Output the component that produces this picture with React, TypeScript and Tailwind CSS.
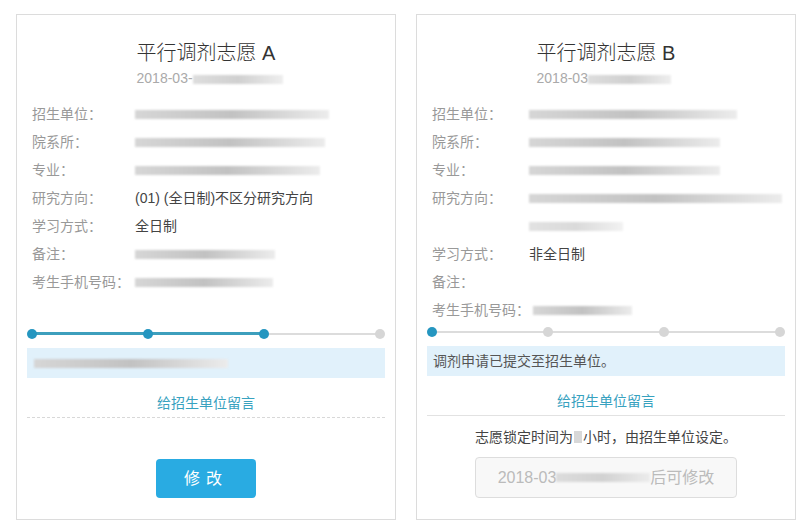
import React from "react";

// 打码区域：模糊的灰条
function Blur({ w, className = "" }: { w: number; className?: string }) {
  return (
    <span
      className={`inline-block h-[9px] align-middle blur-[1px] bg-linear-to-r from-[#d6d6d6] via-[#c2c2c2] to-[#ececec] ${className}`}
      style={{ width: w }}
    />
  );
}

type Row = { label: string; value?: string; blur?: number; blur2?: number };

const ROWS_A: Row[] = [
  { label: "招生单位：", blur: 194 },
  { label: "院系所：", blur: 190 },
  { label: "专业：", blur: 185 },
  { label: "研究方向：", value: "(01) (全日制)不区分研究方向" },
  { label: "学习方式：", value: "全日制" },
  { label: "备注：", blur: 140 },
  { label: "考生手机号码：", blur: 138 },
];

const ROWS_B: Row[] = [
  { label: "招生单位：", blur: 208 },
  { label: "院系所：", blur: 191 },
  { label: "专业：", blur: 191 },
  { label: "研究方向：", blur: 253, blur2: 94 },
  { label: "学习方式：", value: "非全日制" },
  { label: "备注：" },
  { label: "考生手机号码：", blur: 99 },
];

function Progress({ step }: { step: number }) {
  const dots = [0, 1, 2, 3];
  return (
    <div className="relative mx-[5px] h-[10px]">
      <div className="absolute inset-x-0 top-[4px] h-[2px] bg-[#dcdcdc]" />
      {step > 0 && (
        <div
          className="absolute left-0 top-[3px] h-[3px] bg-[#3d9fbd]"
          style={{ width: `${(step / 3) * 100}%` }}
        />
      )}
      {dots.map((d) => (
        <span
          key={d}
          className={`absolute top-0 -ml-[5px] h-[10px] w-[10px] rounded-full ${
            d <= step ? "bg-[#2596c0]" : "bg-[#d6d6d6]"
          }`}
          style={{ left: `${(d / 3) * 100}%` }}
        />
      ))}
    </div>
  );
}

function Card({
  name,
  datePrefix,
  dateBlur,
  rows,
  labelW,
  children,
}: {
  name: string;
  datePrefix: string;
  dateBlur: number;
  rows: Row[];
  labelW: string;
  children: React.ReactNode;
}) {
  return (
    <div className="flex h-[506px] w-[380px] flex-col border border-[#dcdcdc] bg-white">
      <div className="flex flex-col items-center pt-[24px]">
        <div className="w-fit">
          <h2 className="text-[20px] font-light leading-[28px] text-[#333]">{name}</h2>
          <div className="mt-[1px] h-[20px] w-0 whitespace-nowrap text-[14px] leading-[20px] text-[#aaa]">
            {datePrefix}
            <Blur w={dateBlur} className="from-[#dddddd] via-[#d0d0d0] to-[#eeeeee]" />
          </div>
        </div>
      </div>
      <div className="mt-[12px] px-[15px] text-[14px]">
        {rows.map((r) => (
          <div key={r.label} className="flex leading-[28px]">
            <span className={`${labelW} shrink-0 whitespace-nowrap pr-[3px] text-[#999]`}>{r.label}</span>
            <div className="flex flex-col">
              <span className="flex h-[28px] items-center text-[#444]">
                {r.value ?? (r.blur ? <Blur w={r.blur} /> : null)}
              </span>
              {r.blur2 && (
                <span className="flex h-[28px] items-center">
                  <Blur w={r.blur2} className="from-[#e2e2e2] via-[#dadada] to-[#f2f2f2]" />
                </span>
              )}
            </div>
          </div>
        ))}
      </div>
      <div className="mt-auto px-[10px] pb-[21px]">{children}</div>
    </div>
  );
}

export default function App() {
  return (
    <div
      className="flex h-[530px] w-[812px] gap-[20px] bg-white pl-[16px] pt-[14px]"
      style={{ fontFamily: '"Liberation Sans", "Noto Sans CJK SC", sans-serif' }}
    >
      <Card name="平行调剂志愿 A" datePrefix="2018-03-" dateBlur={90} rows={ROWS_A} labelW="min-w-[103px]">
        <Progress step={2} />
        <div className="mt-[9px] flex h-[30px] items-center bg-[#e1f1fb] px-[7px]">
          <Blur w={194} className="from-[#c0c8cc] via-[#a9b4ba] to-[#cdd7dc]" />
        </div>
        <div className="h-[40px] border-b border-dashed border-[#d8d8d8] pt-[16px] text-center text-[14px] leading-[18px] text-[#38a2bf]">
          给招生单位留言
        </div>
        <div className="mt-[41px] flex justify-center">
          <button className="h-[39px] w-[100px] rounded-[4px] bg-[#29abe2] text-[16px] tracking-[6px] text-white">
            修改
          </button>
        </div>
      </Card>

      <Card name="平行调剂志愿 B" datePrefix="2018-03" dateBlur={83} rows={ROWS_B} labelW="min-w-[97px]">
        <Progress step={0} />
        <div className="mt-[9px] flex h-[30px] items-center bg-[#e1f1fb] px-[6px] text-[14px] text-[#555]">
          调剂申请已提交至招生单位。
        </div>
        <div className="h-[40px] border-b border-[#e2e2e2] pt-[16px] text-center text-[14px] leading-[18px] text-[#38a2bf]">
          给招生单位留言
        </div>
        <p className="mt-[11px] text-center text-[14px] leading-[20px] text-[#444]">
          志愿锁定时间为
          <span className="mx-[1px] inline-block h-[12px] w-[8px] bg-[#d8d8d8] align-[-1px]" />
          小时，由招生单位设定。
        </p>
        <div className="mt-[10px] flex justify-center">
          <div className="flex h-[41px] w-[262px] items-center justify-center rounded-[4px] border border-[#dddddd] bg-[#f8f8f8] text-[16px] text-[#bbb]">
            2018-03
            <Blur w={94} className="from-[#dcdcdc] via-[#d2d2d2] to-[#e2e2e2]" />
            后可修改
          </div>
        </div>
      </Card>
    </div>
  );
}
